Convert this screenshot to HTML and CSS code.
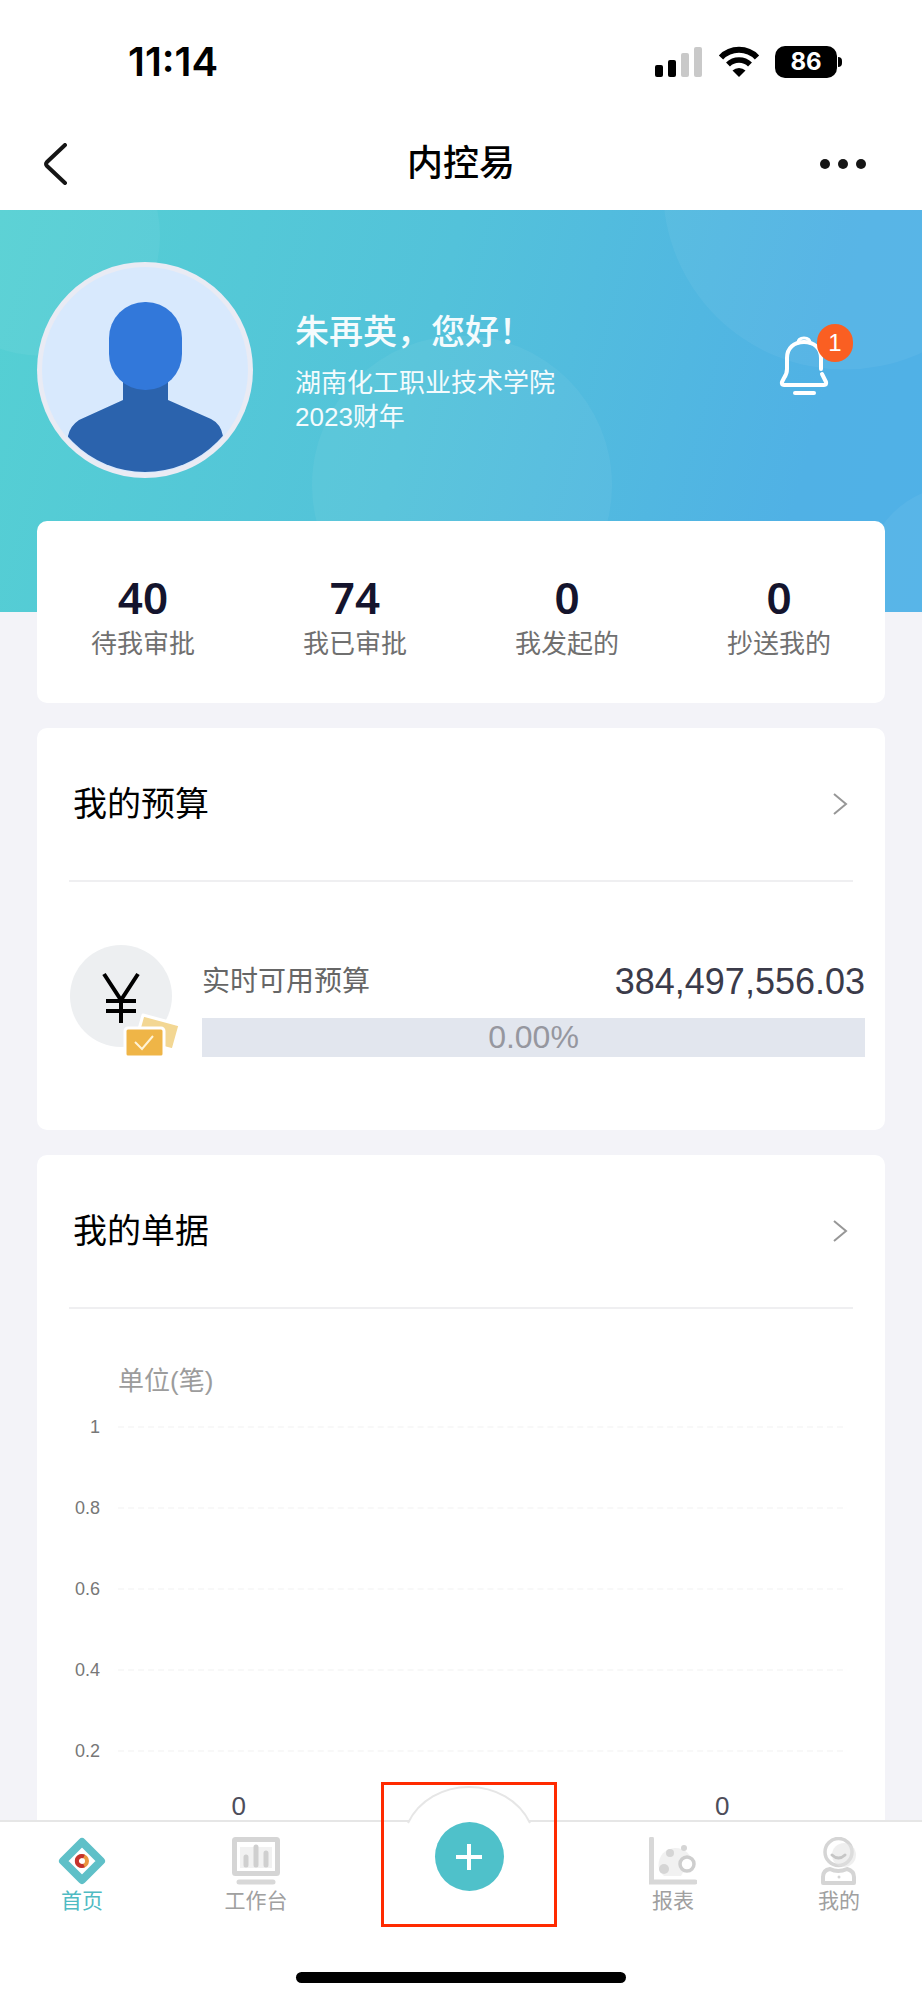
FILE: index.html
```html
<!DOCTYPE html>
<html lang="zh-CN">
<head>
<meta charset="utf-8">
<meta name="viewport" content="width=device-width, initial-scale=1">
<title>内控易</title>
<link rel="stylesheet" href="styles.css">
</head>
<body>
<div class="app">
  <div class="statusbar">
    <span class="clock">11:14</span>
    <div class="indicators">
      <svg width="48" height="32" viewBox="0 0 48 32" aria-hidden="true">
        <rect x="0" y="19" width="8" height="12" rx="2"/>
        <rect x="13" y="14" width="8" height="17" rx="2"/>
        <rect x="26" y="7" width="8" height="24" rx="2" fill="#c9c9c9"/>
        <rect x="39" y="1" width="8" height="30" rx="2" fill="#c9c9c9"/>
      </svg>
      <svg width="42" height="32" viewBox="0 0 42 32" aria-hidden="true">
        <path d="M3 11.500a25 25 0 0 1 36 0" fill="none" stroke="#000" stroke-width="6"/>
        <path d="M10 18.500a15.500 15.500 0 0 1 22 0" fill="none" stroke="#000" stroke-width="5.500"/>
        <path d="M14.500 24.500a9.500 9.500 0 0 1 13 0L21 31z"/>
      </svg>
      <span class="battery">86</span>
    </div>
  </div>
  <header class="titlebar">
    <button class="icon-button" aria-label="返回">
      <svg width="26" height="42" viewBox="0 0 26 42"><path d="M22 2 4 19q-2 2 0 4l18 17" fill="none" stroke="#151515" stroke-width="4" stroke-linecap="round"/></svg>
    </button>
    <h1>内控易</h1>
    <button class="icon-button more" aria-label="更多">
      <svg width="48" height="12" viewBox="0 0 48 12" fill="#151515"><circle cx="6" cy="6" r="5"/><circle cx="24" cy="6" r="5"/><circle cx="42" cy="6" r="5"/></svg>
    </button>
  </header>

  <main class="content">
    <section class="hero">
      <svg class="bubbles" viewBox="0 0 922 403" preserveAspectRatio="none" aria-hidden="true">
        <g fill="#fff" fill-opacity=".05">
          <circle cx="40" cy="26" r="120"/>
          <circle cx="462" cy="276" r="150"/>
          <circle cx="845" cy="-22" r="182"/>
          <circle cx="960" cy="371" r="95"/>
        </g>
      </svg>
      <svg class="avatar" viewBox="0 0 216 216" role="img" aria-label="头像">
        <clipPath id="face"><circle cx="108" cy="108" r="102"/></clipPath>
        <circle cx="108" cy="108" r="108" fill="#e9ebf4"/>
        <circle cx="108" cy="108" r="103" fill="#d8e9fd"/>
        <g clip-path="url(#face)">
          <path d="M86 110h45v28l43 19q10 5 12 17v42H31v-42q2-10 11-16l44-20z" fill="#2b63ad"/>
        </g>
        <rect x="72" y="40" width="73" height="88" rx="36" fill="#3278da"/>
      </svg>
      <div class="greeting">
        <h2>朱再英，您好！</h2>
        <p>湖南化工职业技术学院</p>
        <p>2023财年</p>
      </div>
      <button class="bell" aria-label="消息">
        <svg width="50" height="60" viewBox="0 0 50 60" fill="none" stroke="#fff" stroke-width="4" stroke-linecap="round" stroke-linejoin="round">
          <path d="M42 33V22C42 12 35 6 25 6S8 12 8 22v11q0 5-3 9l-2 4q-1 3 2 3h40q3 0 2-3l-4-8"/>
          <path d="M19 7q0-5 6-5t6 5" stroke-width="3"/>
          <path d="M16 57h19"/>
        </svg>
        <span class="badge">1</span>
      </button>
    </section>

    <section class="card stats">
      <a href="#"><strong>40</strong><span>待我审批</span></a>
      <a href="#"><strong>74</strong><span>我已审批</span></a>
      <a href="#"><strong>0</strong><span>我发起的</span></a>
      <a href="#"><strong>0</strong><span>抄送我的</span></a>
    </section>

    <section class="card">
      <a class="card-head" href="#">
        <h2>我的预算</h2>
        <svg width="17" height="24" viewBox="0 0 17 24"><path d="m2 2 12 10L2 22" fill="none" stroke="#979797" stroke-width="2"/></svg>
      </a>
      <div class="budget">
        <svg class="coin" viewBox="0 0 112 112" aria-hidden="true">
          <circle cx="51" cy="51" r="51" fill="#edeff1"/>
          <path d="m34 29 17 26 17-26M51 54v24M36 56h30M36 66h30" fill="none" stroke="#000" stroke-width="4"/>
          <path d="m73 70 37 10-7 25-37-10z" fill="#f3d793" stroke="#fff" stroke-width="3" stroke-linejoin="round"/>
          <rect x="55" y="83" width="39" height="29" rx="3" fill="#efb547" stroke="#fff" stroke-width="3"/>
          <path d="m65 97 7 7 11-13" fill="none" stroke="#fff3d6" stroke-width="2"/>
        </svg>
        <div class="budget-body">
          <div class="budget-line">
            <span class="budget-label">实时可用预算</span>
            <span class="amount">384,497,556.03</span>
          </div>
          <div class="meter">0.00%</div>
        </div>
      </div>
    </section>

    <section class="card">
      <a class="card-head" href="#">
        <h2>我的单据</h2>
        <svg width="17" height="24" viewBox="0 0 17 24"><path d="m2 2 12 10L2 22" fill="none" stroke="#979797" stroke-width="2"/></svg>
      </a>
      <div class="chart">
        <div class="unit">单位(笔)</div>
        <div class="ticks">
          <div class="tick"><span>1</span><i></i></div>
          <div class="tick"><span>0.8</span><i></i></div>
          <div class="tick"><span>0.6</span><i></i></div>
          <div class="tick"><span>0.4</span><i></i></div>
          <div class="tick"><span>0.2</span><i></i></div>
        </div>
        <div class="values"><span>0</span><span></span><span>0</span></div>
      </div>
    </section>
  </main>

  <nav class="tabbar">
    <a class="tab active" href="#">
      <svg width="48" height="48" viewBox="0 0 48 48">
        <path d="M24 5 43 24 24 43 5 24z" fill="#fff" stroke="#5fc0c8" stroke-width="8" stroke-linejoin="round"/>
        <circle cx="24" cy="24" r="5" fill="none" stroke="#e9963f" stroke-width="4"/>
        <path d="M26 28.500a5 5 0 1 1 0-9" fill="none" stroke="#c3322d" stroke-width="4"/>
      </svg>
      <span>首页</span>
    </a>
    <a class="tab" href="#">
      <svg width="48" height="48" viewBox="0 0 48 48">
        <rect x="2.500" y="2.500" width="43" height="34" rx="1" fill="#fff" stroke="#d5d5d5" stroke-width="5"/>
        <rect x="8" y="10" width="32" height="21" fill="#f1f1f1"/>
        <path d="M14 20v8M24 10v18M34 16v12" stroke="#cfcfcf" stroke-width="5" stroke-linecap="round"/>
        <path d="M7 45h34" stroke="#d8d8d8" stroke-width="5" stroke-linecap="round"/>
      </svg>
      <span>工作台</span>
    </a>
    <div class="center">
      <svg class="bump" width="124" height="38" viewBox="0 0 124 38" aria-hidden="true">
        <path d="M0 38 2 36C12 14 36 1 62 1s50 13 60 35l2 2z" fill="#fff"/>
        <path d="M1 37C12 14 36 1 62 1s50 13 61 36" fill="none" stroke="#e6e6e6" stroke-width="2"/>
      </svg>
      <button class="add" aria-label="新增">
        <svg width="26" height="26" viewBox="0 0 26 26"><path d="M13 0v26M0 13h26" stroke="#fff" stroke-width="4"/></svg>
      </button>
      <div class="highlight"></div>
    </div>
    <a class="tab" href="#">
      <svg width="48" height="48" viewBox="0 0 48 48">
        <path d="M11 35a17 17 0 1 1 31-14L32 39H15z" fill="#f1f1f1"/>
        <path d="M2.500 2v43H46" fill="none" stroke="#d8d8d8" stroke-width="5" stroke-linecap="round"/>
        <g fill="#d5d5d5"><circle cx="21" cy="16" r="4"/><circle cx="35" cy="11" r="3"/><circle cx="15" cy="32" r="5"/></g>
        <circle cx="38" cy="27" r="7" fill="#fff" stroke="#cecece" stroke-width="3.500"/>
      </svg>
      <span>报表</span>
    </a>
    <a class="tab" href="#">
      <svg width="48" height="48" viewBox="0 0 48 48">
        <circle cx="23.500" cy="15" r="13.500" fill="#fff" stroke="#d5d5d5" stroke-width="3.500"/>
        <circle cx="29" cy="18" r="12" fill="#e2e2e2" fill-opacity=".55"/>
        <path d="M17 18q6.500 6 13 0" fill="none" stroke="#c6c6c6" stroke-width="3" stroke-linecap="round"/>
        <path d="M8 46v-6q0-7 7-8 8 4 17 0 7 2 7 8v6z" fill="#fff" stroke="#d5d5d5" stroke-width="4" stroke-linejoin="round"/>
        <circle cx="24" cy="40" r="1.500" fill="#d5d5d5"/>
      </svg>
      <span>我的</span>
    </a>
    <div class="home-indicator"></div>
  </nav>
</div>
</body>
</html>
```

FILE: styles.css
```css
* {
  box-sizing: border-box;
}

body,
h1,
h2,
p {
  margin: 0;
}

body {
  background: #fff;
  font-family: "Liberation Sans", "Noto Sans CJK SC", sans-serif;
  color: #000;
}

a {
  color: inherit;
  text-decoration: none;
}

button {
  padding: 0;
  border: 0;
  background: none;
  font: inherit;
}

svg {
  display: block;
  flex: none;
}

.app {
  display: flex;
  flex-direction: column;
  height: 100vh;
}

/* Phone status bar and page title */
.statusbar {
  display: flex;
  align-items: center;
  justify-content: space-between;
  flex: none;
  padding: 40px 85px 0 128px;
}

.clock {
  font: 600 40px/44px Inter, sans-serif;
}

.indicators {
  display: flex;
  align-items: center;
  gap: 15px;
}

.battery {
  position: relative;
  width: 62px;
  border-radius: 10px;
  background: #000;
  color: #fff;
  font: 700 24px/32px Inter, sans-serif;
  text-align: center;
}

.battery::after {
  content: "";
  position: absolute;
  top: 11px;
  right: -5px;
  width: 4px;
  height: 10px;
  border-radius: 0 4px 4px 0;
  background: #000;
}

.titlebar {
  display: grid;
  grid-template-columns: 1fr auto 1fr;
  align-items: center;
  flex: none;
  padding: 53px 43px 20px;
}

.titlebar h1 {
  font-size: 36px;
  font-weight: 500;
  line-height: 53px;
}

.icon-button {
  justify-self: start;
}

.icon-button.more {
  justify-self: end;
  padding-right: 12px;
}

/* Scrolling page */
.content {
  flex: 1;
  min-height: 0;
  overflow-y: auto;
  scrollbar-width: none;
  background: #f3f3f8;
}

.hero {
  position: relative;
  display: flex;
  align-items: center;
  gap: 42px;
  padding: 52px 93px 134px 37px;
  background: linear-gradient(105deg, #55d0d3 0%, #53c2da 45%, #50b1e5 85%, #50b1e7 100%);
}

.bubbles {
  position: absolute;
  inset: 0;
  width: 100%;
  height: 100%;
}

.avatar {
  position: relative;
  width: 216px;
}

.greeting {
  position: relative;
  flex: 1;
  padding-top: 4px;
  color: #f4fbfd;
  font-size: 26px;
  line-height: 34px;
}

.greeting h2 {
  margin-bottom: 12px;
  font-size: 34px;
  font-weight: 500;
  line-height: 44px;
}

.bell {
  position: relative;
  padding-bottom: 8px;
}

.badge {
  position: absolute;
  top: -12px;
  right: -24px;
  width: 36px;
  border-radius: 18px;
  background: #fa5f22;
  color: #fff;
  font-size: 24px;
  line-height: 38px;
  text-align: center;
}

.card {
  margin: 0 37px 25px;
  border-radius: 10px;
  background: #fff;
}

.stats {
  position: relative;
  display: grid;
  grid-template-columns: repeat(4, 1fr);
  margin-top: -91px;
  padding: 52px 0 40px;
  text-align: center;
}

.stats strong {
  display: block;
  margin-bottom: 4px;
  color: #14142d;
  font: 600 44px/48px "Noto Sans", sans-serif;
}

.stats span {
  display: block;
  color: #707070;
  font-size: 26px;
  line-height: 38px;
}

.card-head {
  display: flex;
  align-items: center;
  justify-content: space-between;
  margin: 0 32px;
  padding: 50px 4px;
  border-bottom: 2px solid #efeff1;
}

.card-head h2 {
  font-size: 34px;
  font-weight: 400;
  line-height: 52px;
}

.budget {
  display: flex;
  align-items: flex-end;
  gap: 20px;
  padding: 63px 20px 73px 33px;
}

.coin {
  width: 112px;
}

.budget-body {
  flex: 1;
}

.budget-line {
  display: flex;
  align-items: center;
  justify-content: space-between;
  margin-bottom: 14px;
  line-height: 44px;
}

.budget-label {
  color: #666;
  font-size: 28px;
}

.amount {
  color: #3b3b4a;
  font-size: 36px;
}

.meter {
  background: #e2e6ee;
  color: #96979f;
  font-size: 32px;
  line-height: 39px;
  text-align: center;
}

/* Chart */
.chart {
  padding: 52px 42px 40px 38px;
  color: #777;
  font-size: 18px;
}

.unit {
  margin-bottom: 16px;
  padding-left: 43px;
  color: #9c9c9c;
  font-size: 26px;
  line-height: 40px;
}

.ticks {
  display: grid;
  gap: 61px;
}

.tick {
  display: grid;
  grid-template-columns: 25px 1fr;
  align-items: center;
  gap: 18px;
  line-height: 20px;
  text-align: right;
}

.tick i {
  border-top: 2px dashed #f8f8f8;
}

.values {
  display: grid;
  grid-template-columns: repeat(3, 1fr);
  margin-top: 32px;
  padding-left: 43px;
  color: #4d4d5a;
  font-size: 26px;
  line-height: 26px;
  text-align: center;
}

/* Bottom navigation */
.tabbar {
  position: relative;
  display: grid;
  grid-template-columns: 164fr 184fr 242fr 166fr 166fr;
  flex: none;
  border-top: 2px solid #e6e6e6;
  background: #fff;
}

.tab {
  display: flex;
  flex-direction: column;
  align-items: center;
  padding-top: 15px;
  color: #a0a0a0;
  font-size: 21px;
  line-height: 32px;
}

.tab.active {
  color: #4fbbc3;
}

.center {
  position: relative;
  display: flex;
  justify-content: center;
}

.bump {
  position: absolute;
  bottom: calc(100% - 2px);
  left: calc(50% - 62px);
}

.add {
  position: relative;
  display: grid;
  place-items: center;
  width: 69px;
  height: 69px;
  border-radius: 50%;
  background: #4fc1ca;
}

.highlight {
  position: absolute;
  top: -40px;
  left: calc(50% - 88px);
  width: 176px;
  height: 145px;
  border: 3px solid #ff2a00;
  pointer-events: none;
}

.home-indicator {
  grid-column: 1 / -1;
  justify-self: center;
  width: 330px;
  height: 11px;
  margin: 55px 0 17px;
  border-radius: 6px;
  background: #000;
}
```
